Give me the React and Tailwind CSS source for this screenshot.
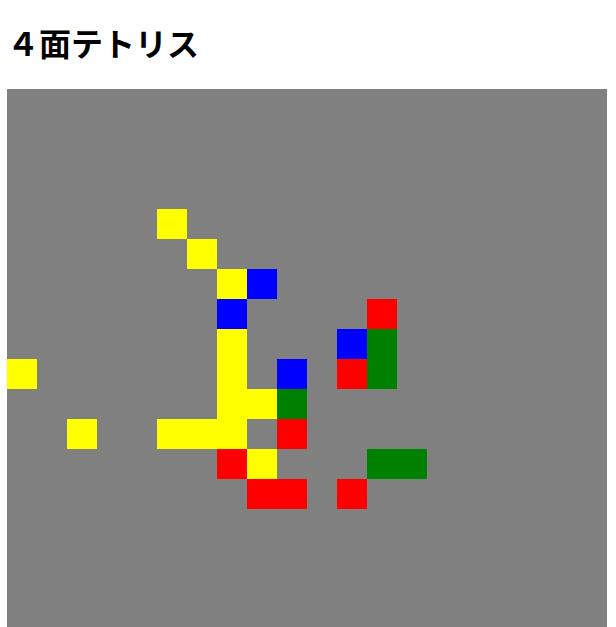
import React from "react";

const Y = "bg-[#ffff00]";
const B = "bg-[#0000ff]";
const R = "bg-[#ff0000]";
const G = "bg-[#008000]";

const cells = {
  "5,4": Y,
  "6,5": Y,
  "7,6": Y, "8,6": B,
  "7,7": B, "12,7": R,
  "7,8": Y, "11,8": B, "12,8": G,
  "0,9": Y, "7,9": Y, "9,9": B, "11,9": R, "12,9": G,
  "7,10": Y, "8,10": Y, "9,10": G,
  "2,11": Y, "5,11": Y, "6,11": Y, "7,11": Y, "9,11": R,
  "7,12": R, "8,12": Y, "12,12": G, "13,12": G,
  "8,13": R, "9,13": R, "11,13": R,
};

export default function App() {
  const rows = [];
  for (let r = 0; r < 20; r++) {
    for (let c = 0; c < 20; c++) {
      const cls = cells[`${c},${r}`];
      rows.push(
        <div key={`${c}-${r}`} className={cls ? `${cls} w-[30px] h-[30px]` : "w-[30px] h-[30px]"} />
      );
    }
  }
  return (
    <div className="pl-[7px] bg-white" style={{ fontFamily: '"Noto Sans CJK JP", "Noto Sans", sans-serif' }}>
      <h1 className="text-[32px] font-bold leading-[46px] mt-[19px] mb-[24px] text-black">４面テトリス</h1>
      <div className="grid grid-cols-[repeat(20,30px)] grid-rows-[repeat(20,30px)] w-[600px] h-[600px] bg-[#808080]">
        {rows}
      </div>
    </div>
  );
}
